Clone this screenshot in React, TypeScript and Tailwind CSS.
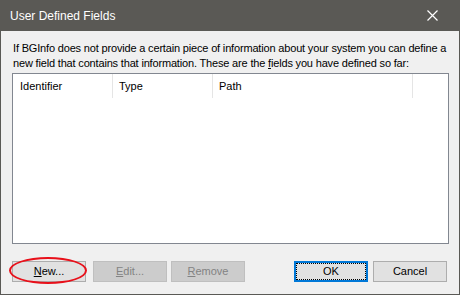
import React from "react";

export default function App() {
  const font = { fontFamily: '"Liberation Sans", Arial, sans-serif' };
  return (
    <div className="w-[460px] h-[295px] bg-[#5a5955] p-[1px] pt-0 flex flex-col" style={font}>
      <div className="h-[31px] flex items-center justify-between pl-[9px] pr-[16px] text-white text-[12px]">
        <span>User Defined Fields</span>
        <svg width="11" height="11" viewBox="0 0 11 11" className="mr-[5px]">
          <path d="M0.5 0.5 L10.5 10.5 M10.5 0.5 L0.5 10.5" stroke="white" strokeWidth="1.2" />
        </svg>
      </div>
      <div className="flex-1 bg-[#f0f0f0] flex flex-col px-[11px] pt-[10px] text-[11px] text-black">
        <p className="leading-[15px] pl-[1px] whitespace-nowrap tracking-[-0.17px]">
          If BGInfo does not provide a certain piece of information about your system you can define a
          <br />
          new field that contains that information. These are the <span className="underline">f</span>ields you have defined so far:
        </p>
        <div className="mt-[2px] h-[171px] w-[437px] border border-[#828790] bg-white flex flex-col">
          <div className="h-[24px] flex items-stretch">
            <div className="w-[100px] border-r border-[#e5e5e5] pl-[7px] flex items-center">Identifier</div>
            <div className="w-[100px] border-r border-[#e5e5e5] pl-[6px] flex items-center">Type</div>
            <div className="w-[200px] border-r border-[#e5e5e5] pl-[6px] flex items-center">Path</div>
          </div>
        </div>
        <div className="mt-[17px] flex items-center">
          <div className="relative">
            <button className="w-[74px] h-[21px] bg-[#e1e1e1] border border-[#adadad] flex items-center justify-center">
              <span><span className="underline">N</span>ew...</span>
            </button>
            <div className="absolute left-[-3px] top-[-4px] w-[78px] h-[27px] rounded-[50%] border-2 border-[#e8101a] pointer-events-none" />
          </div>
          <button className="ml-[7px] w-[74px] h-[21px] bg-[#cccccc] border border-[#bfbfbf] text-[#838383] flex items-center justify-center">
            <span><span className="underline">E</span>dit...</span>
          </button>
          <button className="ml-[4px] w-[74px] h-[21px] bg-[#cccccc] border border-[#bfbfbf] text-[#838383] flex items-center justify-center">
            <span><span className="underline">R</span>emove</span>
          </button>
          <button className="ml-[49px] w-[74px] h-[21px] bg-[#e1e1e1] border-2 border-[#0078d7] flex items-center justify-center">
            <span className="outline outline-1 outline-dotted outline-black w-[68px] h-[15px] flex items-center justify-center">OK</span>
          </button>
          <button className="ml-[5px] w-[74px] h-[21px] bg-[#e1e1e1] border border-[#adadad] flex items-center justify-center">
            Cancel
          </button>
        </div>
      </div>
    </div>
  );
}
